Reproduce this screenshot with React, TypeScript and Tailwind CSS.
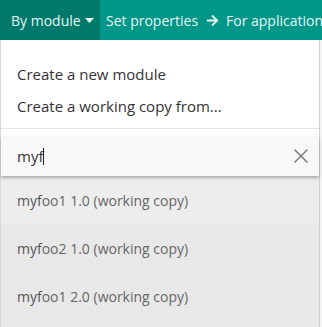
import { X } from "lucide-react";
import { FaArrowRight } from "react-icons/fa";

const results = [
  { id: "1", rest: "oo1 1.0 (working copy)", active: true },
  { id: "2", rest: "oo2 1.0 (working copy)", active: false },
  { id: "3", rest: "oo1 2.0 (working copy)", active: false },
];

export default function App() {
  return (
    <div
      className="w-[322px] h-[327px] bg-white overflow-hidden flex flex-col"
      style={{ fontFamily: "'Open Sans', Lato, sans-serif" }}
    >
      {/* Top nav */}
      <nav className="h-10 shrink-0 bg-[#009688] flex items-stretch text-[14px] text-[#e8f5f3] whitespace-nowrap">
        <div className="w-[100px] shrink-0 bg-[#00796b] pl-[11px] flex items-center gap-[4px]">
          <span>By module</span>
          <svg width="9" height="5" viewBox="0 0 9 5" className="mt-px">
            <path d="M0 0h9L4.5 5z" fill="#e8f5f3" />
          </svg>
        </div>
        <div className="w-[126px] shrink-0 pl-[6px] flex items-center gap-[8px]">
          <span>Set properties</span>
          <FaArrowRight className="w-[13px] h-[13px]" />
        </div>
        <div className="flex items-center">
          <span>For applications</span>
        </div>
      </nav>

      {/* Dropdown over page */}
      <div className="flex-1 flex min-h-0">
        <div className="w-px bg-[#d9d9d9]" />
        <div className="w-[318px] bg-white flex flex-col text-[15px] text-[#333]">
          <div className="pt-[18px]">
            <div className="h-8 pl-4 flex items-center">Create a new module</div>
            <div className="h-8 pl-4 flex items-center">Create a working copy from...</div>
          </div>
          <div className="mt-[6px] h-px bg-[#e2e2e2]" />
          <div className="mt-[7px] h-10 bg-[#f8f8f8] flex items-center pl-4 pr-[6px] shadow-[0_2px_3px_rgba(0,0,0,0.28)] relative z-10">
            <span className="flex-1 flex items-center">
              myf<span className="inline-block w-px h-[17px] bg-[#222]" />
            </span>
            <X className="w-6 h-6 text-[#7a7a7a]" strokeWidth={1.5} />
          </div>
          <div className="flex-1 bg-[#e8e8e8] text-[#666] text-[14px]">
            {results.map((r) => (
              <div
                key={r.id}
                className={`h-12 pl-4 flex items-center ${r.active ? "bg-[#ededed]" : ""}`}
              >
                <span className="text-[#555]">myf</span>
                {r.rest}
              </div>
            ))}
          </div>
        </div>
        <div className="w-px bg-[#cfcfcf]" />
        <div className="flex-1 bg-[#f4f4f4]" />
      </div>
    </div>
  );
}
